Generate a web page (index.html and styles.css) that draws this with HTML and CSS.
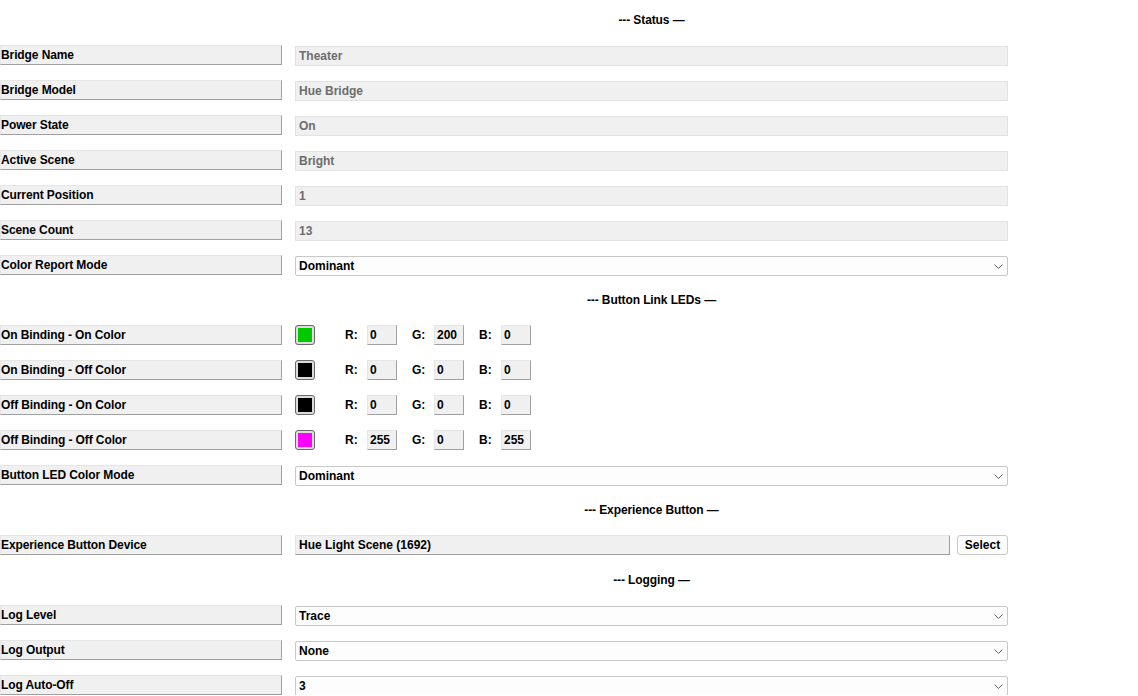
FILE: index.html
```html
<!DOCTYPE html>
<html>
<head>
<meta charset="utf-8">
<link rel="stylesheet" href="styles.css">
</head>
<body>
<div class="form">
  <div class="header">--- Status —</div>

  <div class="label">Bridge Name</div>
  <div class="ro">Theater</div>

  <div class="label">Bridge Model</div>
  <div class="ro">Hue Bridge</div>

  <div class="label">Power State</div>
  <div class="ro">On</div>

  <div class="label">Active Scene</div>
  <div class="ro">Bright</div>

  <div class="label">Current Position</div>
  <div class="ro">1</div>

  <div class="label">Scene Count</div>
  <div class="ro">13</div>

  <div class="label">Color Report Mode</div>
  <div class="combo"><span>Dominant</span><svg class="chev" width="9" height="5" viewBox="0 0 9 5"><polyline points="0.5,0.5 4.5,4.5 8.5,0.5" fill="none" stroke="#606060" stroke-width="1"/></svg></div>

  <div class="header">--- Button Link LEDs —</div>

  <div class="label">On Binding - On Color</div>
  <div class="colorrow">
    <div class="swatch"><div class="fill green"></div></div>
    <span class="ch">R:</span><div class="num">0</div>
    <span class="ch">G:</span><div class="num">200</div>
    <span class="ch">B:</span><div class="num">0</div>
  </div>

  <div class="label">On Binding - Off Color</div>
  <div class="colorrow">
    <div class="swatch"><div class="fill black"></div></div>
    <span class="ch">R:</span><div class="num">0</div>
    <span class="ch">G:</span><div class="num">0</div>
    <span class="ch">B:</span><div class="num">0</div>
  </div>

  <div class="label">Off Binding - On Color</div>
  <div class="colorrow">
    <div class="swatch"><div class="fill black"></div></div>
    <span class="ch">R:</span><div class="num">0</div>
    <span class="ch">G:</span><div class="num">0</div>
    <span class="ch">B:</span><div class="num">0</div>
  </div>

  <div class="label">Off Binding - Off Color</div>
  <div class="colorrow">
    <div class="swatch"><div class="fill magenta"></div></div>
    <span class="ch">R:</span><div class="num">255</div>
    <span class="ch">G:</span><div class="num">0</div>
    <span class="ch">B:</span><div class="num">255</div>
  </div>

  <div class="label">Button LED Color Mode</div>
  <div class="combo"><span>Dominant</span><svg class="chev" width="9" height="5" viewBox="0 0 9 5"><polyline points="0.5,0.5 4.5,4.5 8.5,0.5" fill="none" stroke="#606060" stroke-width="1"/></svg></div>

  <div class="header">--- Experience Button —</div>

  <div class="label">Experience Button Device</div>
  <div class="devrow">
    <div class="dev">Hue Light Scene (1692)</div>
    <div class="btn">Select</div>
  </div>

  <div class="header">--- Logging —</div>

  <div class="label">Log Level</div>
  <div class="combo"><span>Trace</span><svg class="chev" width="9" height="5" viewBox="0 0 9 5"><polyline points="0.5,0.5 4.5,4.5 8.5,0.5" fill="none" stroke="#606060" stroke-width="1"/></svg></div>

  <div class="label">Log Output</div>
  <div class="combo"><span>None</span><svg class="chev" width="9" height="5" viewBox="0 0 9 5"><polyline points="0.5,0.5 4.5,4.5 8.5,0.5" fill="none" stroke="#606060" stroke-width="1"/></svg></div>

  <div class="label">Log Auto-Off</div>
  <div class="combo"><span>3</span><svg class="chev" width="9" height="5" viewBox="0 0 9 5"><polyline points="0.5,0.5 4.5,4.5 8.5,0.5" fill="none" stroke="#606060" stroke-width="1"/></svg></div>
</div>
</body>
</html>
```

FILE: styles.css
```css
html, body {
  margin: 0;
  padding: 0;
  background: #ffffff;
}
body {
  font-family: "Liberation Sans", Arial, sans-serif;
  font-size: 12px;
  font-weight: bold;
  color: #000;
}
.form {
  display: grid;
  grid-template-columns: 282px 713px;
  column-gap: 13px;
  grid-auto-rows: 20px;
  row-gap: 15px;
  padding-top: 10px;
  width: 1008px;
}
.header {
  grid-column: 2;
  display: flex;
  align-items: center;
  justify-content: center;
  font-size: 12px;
  letter-spacing: -0.1px;
}
.label {
  grid-column: 1;
  box-sizing: border-box;
  background: #f0f0f0;
  border: 1px solid;
  border-color: #e6e6e6 #a0a0a0 #a0a0a0 #e6e6e6;
  display: flex;
  align-items: center;
  padding-left: 0;
  letter-spacing: -0.1px;
  white-space: nowrap;
}
.ro {
  grid-column: 2;
  box-sizing: border-box;
  background: #f0f0f0;
  border: 1px solid #e2e2e2;
  color: #6d6d6d;
  display: flex;
  align-items: center;
  padding-left: 3px;
  margin-top: 1px;
  height: 20px;
}
.combo {
  grid-column: 2;
  box-sizing: border-box;
  background: #fdfdfd;
  border: 1px solid #c8c8c8;
  border-radius: 2px;
  display: flex;
  align-items: center;
  justify-content: space-between;
  padding: 0 4px 0 3px;
  margin-top: 1px;
  height: 20px;
}
.chev {
  display: block;
}
.colorrow {
  grid-column: 2;
  display: flex;
  align-items: center;
}
.swatch {
  box-sizing: border-box;
  width: 20px;
  height: 20px;
  border: 1px solid #6a6a6a;
  border-radius: 3px;
  background: #dcdcdc;
  padding: 2px;
}
.fill {
  width: 14px;
  height: 14px;
}
.green { background: #00c800; }
.black { background: #000000; }
.magenta { background: #ff00ff; }
.ch {
  width: 22px;
  margin-left: 15px;
}
.swatch + .ch {
  margin-left: 30px;
}
.num {
  box-sizing: border-box;
  width: 30px;
  height: 20px;
  background: #f0f0f0;
  border: 1px solid;
  border-color: #e6e6e6 #a0a0a0 #a0a0a0 #e6e6e6;
  display: flex;
  align-items: center;
  padding-left: 2px;
}
.devrow {
  grid-column: 2;
  display: flex;
  align-items: center;
  gap: 7px;
}
.dev {
  flex: 1;
  box-sizing: border-box;
  height: 20px;
  background: #f0f0f0;
  border: 1px solid;
  border-color: #e6e6e6 #a0a0a0 #a0a0a0 #e6e6e6;
  display: flex;
  align-items: center;
  padding-left: 3px;
}
.btn {
  box-sizing: border-box;
  width: 51px;
  height: 20px;
  background: #fdfdfd;
  border: 1px solid #c8c8c8;
  border-radius: 3px;
  display: flex;
  align-items: center;
  justify-content: center;
}
```
